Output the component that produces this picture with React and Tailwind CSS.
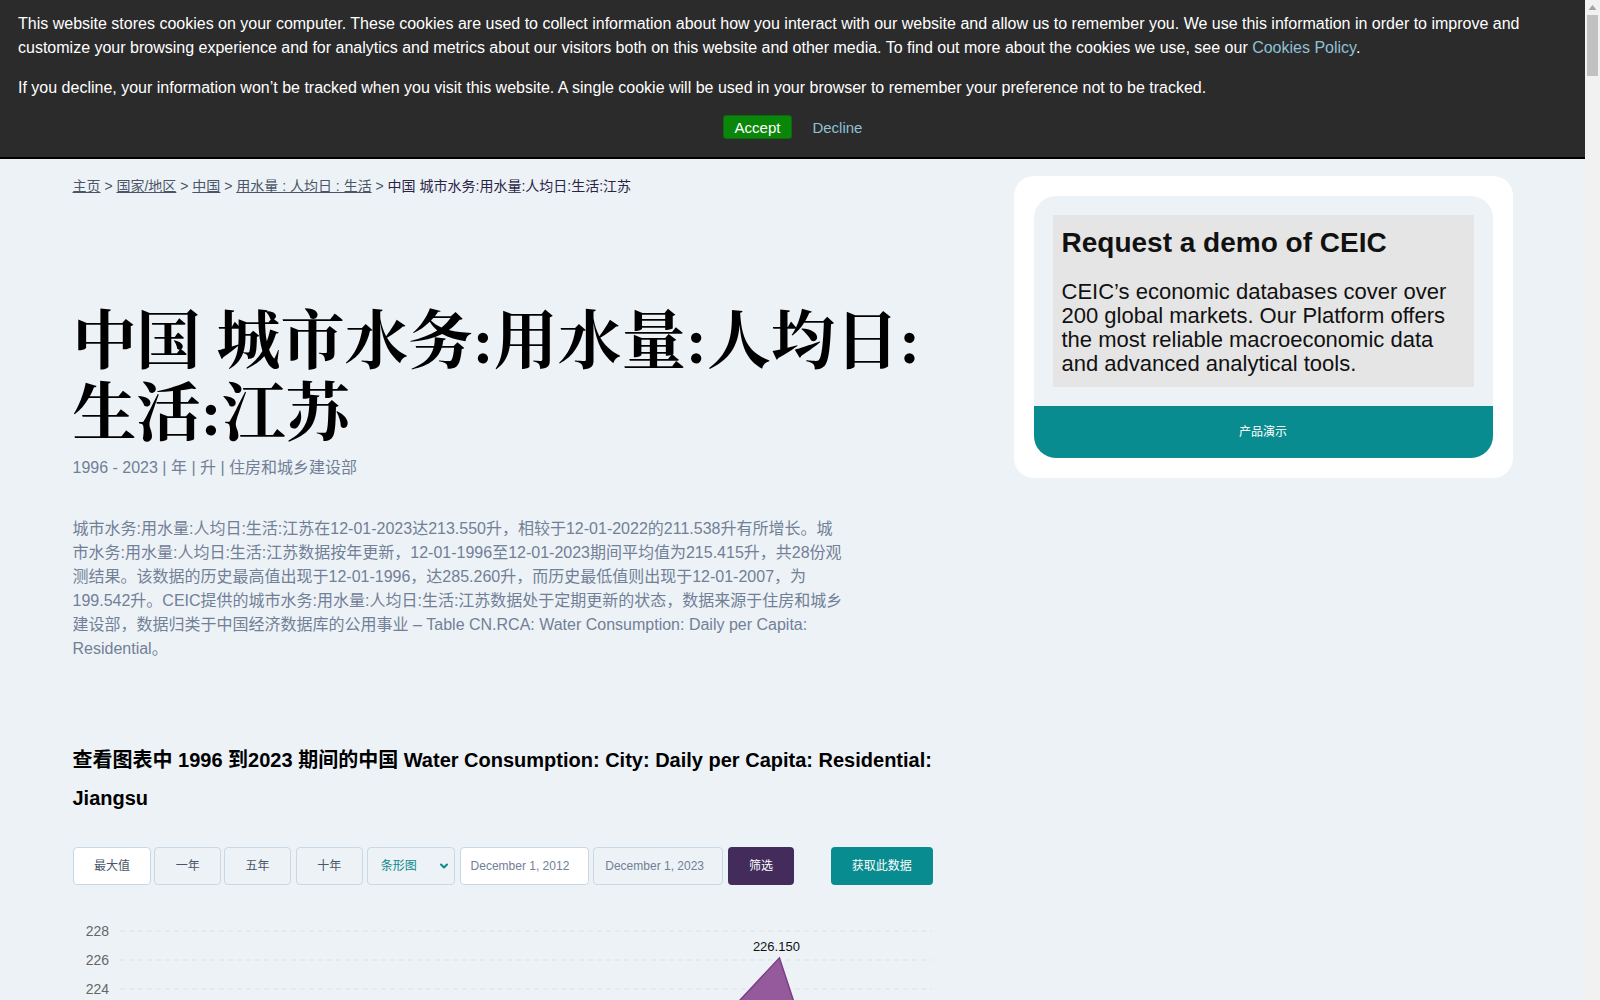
import React from 'react';
import { ChevronDown } from 'lucide-react';

const sans = 'font-["Liberation_Sans","Noto_Sans_CJK_SC",sans-serif]';

const chartData = [
  { year: 2012, value: 210.3 },
  { year: 2013, value: 205.8 },
  { year: 2014, value: 212.6 },
  { year: 2015, value: 208.4 },
  { year: 2016, value: 211.9 },
  { year: 2017, value: 214.2 },
  { year: 2018, value: 216.7 },
  { year: 2019, value: 219.4 },
  { year: 2020, value: 221.0 },
  { year: 2021, value: 226.15 },
  { year: 2022, value: 211.538 },
  { year: 2023, value: 213.55 },
];

const CookieBanner = () => (
  <div className={`${sans} bg-[#2b2b2b] text-white border-b-2 border-black pt-[12px] px-[18px] pb-[18px]`}>
    <p className="text-[16px] leading-[24px]">
      This website stores cookies on your computer. These cookies are used to collect information about how you interact with our website and allow us to remember you. We use this information in order to improve and customize your browsing experience and for analytics and metrics about our visitors both on this website and other media. To find out more about the cookies we use, see our{' '}
      <a className="text-[#8fc1d3]">Cookies Policy</a>.
    </p>
    <p className="text-[16px] leading-[24px] mt-4">
      If you decline, your information won’t be tracked when you visit this website. A single cookie will be used in your browser to remember your preference not to be tracked.
    </p>
    <div className="flex justify-center items-center gap-[20px] mt-[15px]">
      <button className="h-[24px] px-[11px] bg-[#0a870a] border border-[#0b6b0b] rounded-[3px] text-[15px] leading-none text-white">
        Accept
      </button>
      <button className="text-[15px] leading-none text-[#8fc1d3]">Decline</button>
    </div>
  </div>
);

const Breadcrumb = () => {
  const links = ['主页', '国家/地区', '中国', '用水量 : 人均日 : 生活'];
  return (
    <div className="text-[14px] leading-[20px] text-[#4a5568]">
      {links.map((l) => (
        <span key={l}>
          <a className="underline">{l}</a>
          <span> &gt; </span>
        </span>
      ))}
      <span className="text-[#2a2445]">中国 城市水务:用水量:人均日:生活:江苏</span>
    </div>
  );
};

const Chart = () => {
  const top = 32;
  const unit = 14.5;
  const y = (v) => top + (228 - v) * unit;
  const x = (i) => 80 + i * 69.6;
  const ticks = Array.from({ length: 17 }, (_, i) => 228 - i * 2);
  const base = y(196);
  const line = chartData.map((d, i) => `${x(i)},${y(d.value)}`).join(' ');
  const area = `${x(0)},${base} ${line} ${x(chartData.length - 1)},${base}`;
  const peak = 9;
  return (
    <svg width="860" height="540" className="block">
      {ticks.map((t) => (
        <g key={t}>
          <line x1="47" x2="859" y1={y(t)} y2={y(t)} stroke="#dde2e8" strokeDasharray="5 4" />
          <text x="36" y={y(t) + 5} textAnchor="end" fontSize="14" fill="#666" fontFamily="Liberation Sans">
            {t}
          </text>
        </g>
      ))}
      <polygon points={area} fill="#955a9c" stroke="#7b3f84" strokeWidth="1.5" />
      <text x={x(peak) - 3} y={y(226.15) - 7} textAnchor="middle" fontSize="13" fill="#111" fontFamily="Liberation Sans">
        226.150
      </text>
      {chartData.map((d, i) => (
        <text key={d.year} x={x(i)} y={base + 24} textAnchor="middle" fontSize="13" fill="#666" fontFamily="Liberation Sans">
          {d.year}
        </text>
      ))}
    </svg>
  );
};

const Controls = () => {
  const btn = 'h-[38px] rounded-[4px] border border-[#c8d8e4] text-[12px] flex items-center';
  return (
    <div className="flex items-center mt-[30px]">
      <button className={`${btn} justify-center w-[79px] bg-white text-[#4a5568]`}>最大值</button>
      <button className={`${btn} justify-center w-[67px] ml-[3px] bg-[#edf2f7] text-[#4a5568]`}>一年</button>
      <button className={`${btn} justify-center w-[67px] ml-[3px] bg-[#edf2f7] text-[#4a5568]`}>五年</button>
      <button className={`${btn} justify-center w-[67px] ml-[5px] bg-[#edf2f7] text-[#4a5568]`}>十年</button>
      <div className={`${btn} w-[88px] ml-[4px] bg-[#edf2f7] justify-between pl-[13px] pr-[4px] text-[#0a8a8a]`}>
        <span>条形图</span>
        <ChevronDown className="w-[12px] h-[12px]" color="#0a8a8a" strokeWidth={4} />
      </div>
      <div className={`${btn} w-[130px] ml-[5px] bg-white pl-[10px] text-[#718096]`}>December 1, 2012</div>
      <div className={`${btn} w-[130px] ml-[4px] bg-[#edf2f7] pl-[11px] text-[#718096]`}>December 1, 2023</div>
      <button className="h-[38px] w-[66px] ml-[5px] rounded-[4px] bg-[#432c5c] text-white text-[12px]">筛选</button>
      <button className="h-[38px] w-[102px] ml-[37px] rounded-[4px] bg-[#088c8f] text-white text-[12px]">获取此数据</button>
    </div>
  );
};

const DemoCard = () => (
  <div className="w-[499px] bg-white rounded-[20px] p-[20px]">
    <div className="bg-[#edf2f7] rounded-[22px] overflow-hidden">
      <div className="p-[19px]">
        <div className="bg-[#e5e5e5] pt-[10px] pb-[11px] px-[9px]">
          <h3 className="text-[28px] leading-[36px] font-bold text-[#111]">Request a demo of CEIC</h3>
          <p className="mt-[19px] text-[22px] leading-[24px] text-[#111]">
            CEIC’s economic databases cover over 200 global markets. Our Platform offers the most reliable macroeconomic data and advanced analytical tools.
          </p>
        </div>
      </div>
      <button className="w-full h-[52px] bg-[#088c8f] text-white text-[12px]">产品演示</button>
    </div>
  </div>
);

// page scrollbar as it shows in the reference
const ScrollTrack = () => (
  <div className="w-[15px] shrink-0 bg-[#f1f1f1] flex flex-col items-center">
    <svg width="15" height="15" className="block">
      <polygon points="3.5,10 11.5,10 7.5,5" fill="#a3a3a3" />
    </svg>
    <div className="w-[11px] h-[61px] bg-[#c1c1c1]" />
  </div>
);

export default function App() {
  return (
    <div className={`${sans} bg-[#edf2f7] h-screen overflow-hidden flex`}>
      <div className="flex-1 overflow-hidden">
        <CookieBanner />
        <div className="max-w-[1440px] mx-auto flex justify-between pt-[17px] pb-10">
          <div className="w-[860px]">
            <Breadcrumb />
            <h1 className='mt-[110px] font-["Liberation_Serif","Noto_Serif_CJK_SC",serif] font-bold text-[64px] leading-[72px] text-black'>
              中国 城市水务:用水量:人均日:生活:江苏
            </h1>
            <div className="mt-[6px] text-[16px] leading-[24px] text-[#718096]">
              1996 - 2023 | 年 | 升 | 住房和城乡建设部
            </div>
            <p className="mt-[37px] w-[772px] text-[16px] leading-[24px] text-[#718096]">
              城市水务:用水量:人均日:生活:江苏在12-01-2023达213.550升，相较于12-01-2022的211.538升有所增长。城市水务:用水量:人均日:生活:江苏数据按年更新，12-01-1996至12-01-2023期间平均值为215.415升，共28份观测结果。该数据的历史最高值出现于12-01-1996，达285.260升，而历史最低值则出现于12-01-2007，为199.542升。CEIC提供的城市水务:用水量:人均日:生活:江苏数据处于定期更新的状态，数据来源于住房和城乡建设部，数据归类于中国经济数据库的公用事业 – Table CN.RCA: Water Consumption: Daily per Capita: Residential。
            </p>
            <h2 className="mt-[80px] text-[20px] leading-[38px] font-bold text-black">
              查看图表中 1996 到2023 期间的中国 Water Consumption: City: Daily per Capita: Residential: Jiangsu
            </h2>
            <Controls />
            <div className="mt-[14px]">
              <Chart />
            </div>
          </div>
          <div>
            <DemoCard />
          </div>
        </div>
      </div>
      <ScrollTrack />
    </div>
  );
}
